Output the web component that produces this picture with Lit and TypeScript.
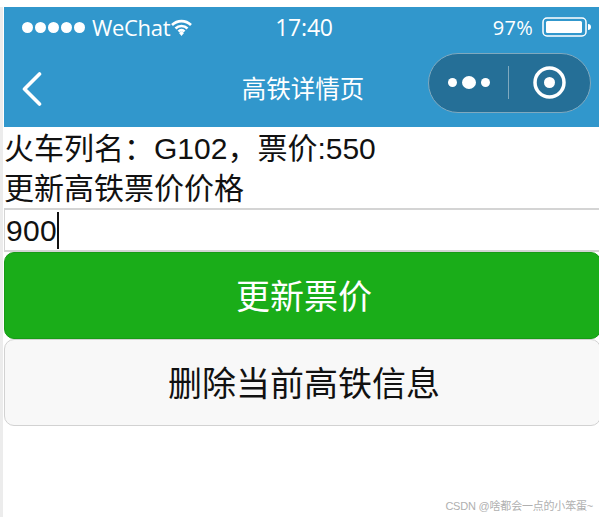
import { LitElement, html, css } from "lit";
import { customElement } from "lit/decorators.js";

@customElement("app-root")
export class AppRoot extends LitElement {
  static styles = css`
    :host {
      display: block;
      position: relative;
      width: 599px;
      height: 517px;
      overflow: hidden;
      background: #fff;
      font-family: "Liberation Sans", "Noto Sans CJK SC", sans-serif;
      color: #111;
    }
    .frame {
      margin: 7px 0 0 3px;
      padding-left: 1px;
      height: 510px;
      box-shadow: -3px 0 0 #ececec;
    }
    .head {
      background: #3197cc;
      height: 120px;
      color: #fff;
      display: flex;
      flex-direction: column;
      font-family: "Open Sans", "Noto Sans CJK SC", sans-serif;
    }
    .status {
      height: 40px;
      display: grid;
      grid-template-columns: 1fr auto 1fr;
      align-items: center;
      padding: 0 8px 0 18px;
    }
    .left, .right { display: flex; align-items: center; }
    .right { justify-content: flex-end; }
    .dots { display: flex; gap: 2px; margin-right: 7px; }
    .dots i { width: 11px; height: 11px; border-radius: 50%; background: #fff; display: block; }
    .carrier { font-size: 22px; letter-spacing: -0.3px; margin-right: 1px; }
    .time { font-size: 23px; letter-spacing: -0.2px; margin-right: 5px; }
    .pct { font-size: 20px; margin-right: 9px; letter-spacing: 0.3px; }
    .nav {
      flex: 1;
      display: grid;
      grid-template-columns: 1fr auto 1fr;
      align-items: center;
      padding: 0 8px 0 18px;
    }
    .back { display: block; margin-top: 4px; }
    .title { font-size: 24.5px; font-family: "Noto Sans CJK SC", sans-serif; line-height: 40px; margin: 2px 2px 0 -5px; }
    .capsule {
      justify-self: end;
      width: 163px;
      height: 60px;
      margin-bottom: 9px;
      box-sizing: border-box;
      border: 1.5px solid #7fa9bf;
      border-radius: 30px;
      background: #256f97;
      display: flex;
      align-items: center;
    }
    .more { width: 79px; display: flex; justify-content: center; align-items: center; gap: 5px; }
    .more i { display: block; border-radius: 50%; background: #fff; width: 9px; height: 9px; }
    .more i.big { width: 14px; height: 13px; }
    .sep { width: 1px; height: 33px; background: #7fa9bf; }
    .circle { flex: 1; display: flex; justify-content: center; }
    .lines { font-size: 30px; line-height: 40px; padding-top: 2px; }
    .line { height: 40px; white-space: nowrap; }
    .input {
      box-sizing: border-box;
      height: 44px;
      margin-top: -1px;
      border: solid #d4d4d4;
      border-width: 2px 0 2px 1px;
      padding: 1px 0 0 1px;
      display: flex;
      align-items: center;
      line-height: 40px;
      letter-spacing: 0.3px;
    }
    .caret { width: 2px; height: 37px; background: #111; }
    button {
      display: block;
      width: calc(100% + 2px);
      box-sizing: border-box;
      height: 87px;
      font: inherit;
      font-size: 34px;
      border-radius: 10px;
      padding: 0 0 3px 3px;
    }
    .primary {
      background: #1aad19;
      color: #fff;
      border: 1px solid #179b16;
    }
    .plain {
      background: #f8f8f8;
      color: #111;
      border: 1px solid #d2d2d2;
    }
    .mark {
      position: absolute;
      right: 6px;
      bottom: 4px;
      font-size: 11px;
      letter-spacing: -0.2px;
      color: #b0b0b0;
      line-height: 14px;
      font-family: "Liberation Sans", "Noto Sans CJK SC", sans-serif;
    }
  `;

  render() {
    return html`
      <div class="frame">
        <div class="head">
          <div class="status">
            <div class="left">
              <span class="dots"><i></i><i></i><i></i><i></i><i></i></span>
              <span class="carrier">WeChat</span>
              <svg width="21" height="17" viewBox="0 0 21 17" fill="none" stroke="#fff" stroke-width="2.6">
                <path d="M1 6a13.5 13.5 0 0 1 19 0" />
                <path d="M4.500 9.500a8.500 8.500 0 0 1 12 0" />
                <path d="M7.500 12.500a4 4 0 0 1 6 0" />
                <path d="M8 14l2.500-2 2.500 2-2.500 3z" fill="#fff" stroke="none" />
              </svg>
            </div>
            <div class="time">17:40</div>
            <div class="right">
              <span class="pct">97%</span>
              <svg width="49" height="20" viewBox="0 0 49 20">
                <rect x="1" y="1" width="43" height="18" rx="4" fill="none" stroke="#fff" stroke-width="1.500" />
                <rect x="4" y="4" width="36" height="12" rx="1.500" fill="#fff" />
                <path d="M46 7c2 0 3 1 3 3s-1 3-3 3z" fill="#fff" />
              </svg>
            </div>
          </div>
          <div class="nav">
            <div class="left">
              <svg class="back" width="20" height="34" viewBox="0 0 20 34" fill="none" stroke="#fff" stroke-width="3.600" stroke-linecap="round" stroke-linejoin="round">
                <path d="M17.500 2 2.500 17l15 15" />
              </svg>
            </div>
            <div class="title">高铁详情页</div>
            <div class="capsule">
              <div class="more"><i></i><i class="big"></i><i></i></div>
              <div class="sep"></div>
              <div class="circle">
                <svg width="33" height="33" viewBox="0 0 33 33">
                  <circle cx="16.500" cy="16.500" r="14.500" fill="none" stroke="#fff" stroke-width="3.500" />
                  <circle cx="16.500" cy="16.500" r="5.500" fill="#fff" />
                </svg>
              </div>
            </div>
          </div>
        </div>
        <div class="lines">
          <div class="line">火车列名：G102，票价:550</div>
          <div class="line">更新高铁票价价格</div>
          <div class="input"><span>900</span><span class="caret"></span></div>
        </div>
        <button class="primary">更新票价</button>
        <button class="plain">删除当前高铁信息</button>
      </div>
      <div class="mark">CSDN @啥都会一点的小笨蛋~</div>
    `;
  }
}
